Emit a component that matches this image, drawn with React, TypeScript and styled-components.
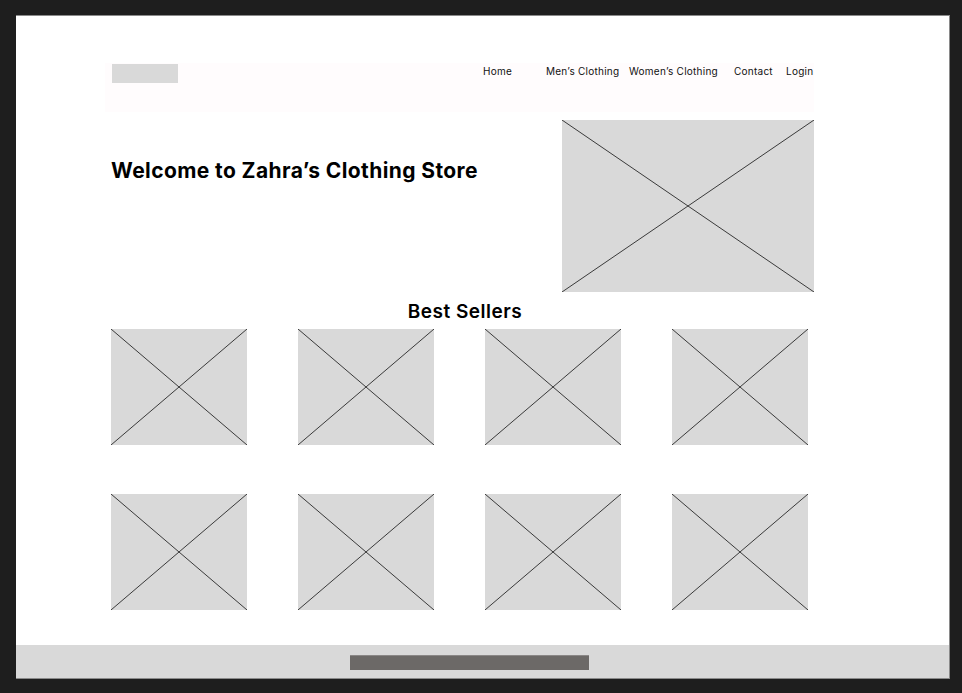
import React from 'react';
import styled, { createGlobalStyle } from 'styled-components';

const GlobalStyle = createGlobalStyle`
  html, body {
    margin: 0;
    padding: 0;
    background: #1e1e1e;
  }
  body {
    font-family: Inter, "Open Sans", Arial, sans-serif;
    color: #000;
  }
`;

const Stage = styled.div`
  padding: 15px 0 0 16px;
  min-height: 693px;
  box-sizing: border-box;
`;

const Frame = styled.div`
  width: 933px;
  border-top: 1px solid #8a8a8a;
  border-right: 1px solid #8a8a8a;
  border-bottom: 1px solid #8a8a8a;
  background: #d9d9d9;
`;

const Canvas = styled.main`
  background: #ffffff;
  height: 629px;
  box-sizing: border-box;
  padding: 47px 0 0 95px;
`;

const Column = styled.div`
  width: 703px;
`;

const Header = styled.header`
  display: flex;
  align-items: flex-start;
  justify-content: space-between;
  width: 709px;
  height: 49px;
  margin-left: -6px;
  box-sizing: border-box;
  padding: 1px 2px 0 7px;
  background: #fffcfd;
`;

const Logo = styled.div`
  width: 66px;
  height: 19px;
  background: #d9d9d9;
`;

const Nav = styled.nav`
  display: flex;
  margin-top: 1px;
`;

const NavLink = styled.a<{ $w: number }>`
  width: ${(p) => p.$w}px;
  font-size: 10px;
  line-height: 12px;
  color: #111;
  text-decoration: none;
  white-space: nowrap;
  letter-spacing: 0.25px;
`;

const Hero = styled.section`
  display: flex;
  justify-content: space-between;
  align-items: flex-start;
  margin-top: 8px;
`;

const Heading = styled.h1`
  margin: 38px 0 0;
  font-size: 21px;
  line-height: 25px;
  font-weight: 700;
  letter-spacing: 0.4px;
`;

const Placeholder = styled.div<{ $w: number; $h: number }>`
  width: ${(p) => p.$w}px;
  height: ${(p) => p.$h}px;
  background: #d9d9d9;
  flex-shrink: 0;

  svg {
    display: block;
    width: 100%;
    height: 100%;
  }
`;

const SectionTitle = styled.h2`
  margin: 9px 0 6px;
  padding-left: 5px;
  text-align: center;
  font-size: 19px;
  line-height: 22px;
  font-weight: 600;
  letter-spacing: 0.5px;
`;

const ProductGrid = styled.div`
  display: grid;
  grid-template-columns: repeat(4, 136px);
  column-gap: 51px;
  row-gap: 49px;
`;

const Footer = styled.footer`
  height: 33px;
  box-sizing: border-box;
  padding: 10px 0 0 334px;
`;

const FooterBar = styled.div`
  width: 239px;
  height: 15px;
  background: #6c6967;
  border-top: 1px solid #8a8786;
  box-sizing: border-box;
`;

const Cross = () => (
  <svg viewBox="0 0 100 100" preserveAspectRatio="none">
    <line x1="0" y1="0" x2="100" y2="100" stroke="#3a3a3a" strokeWidth="1" vectorEffect="non-scaling-stroke" />
    <line x1="100" y1="0" x2="0" y2="100" stroke="#3a3a3a" strokeWidth="1" vectorEffect="non-scaling-stroke" />
  </svg>
);

const navItems = [
  { label: 'Home', w: 63 },
  { label: 'Men’s Clothing', w: 83 },
  { label: 'Women’s Clothing', w: 105 },
  { label: 'Contact', w: 52 },
  { label: 'Login', w: 26 },
];

const App = () => {
  return (
    <>
      <GlobalStyle />
      <Stage>
        <Frame>
          <Canvas>
            <Column>
              <Header>
                <Logo />
                <Nav>
                  {navItems.map((item) => (
                    <NavLink key={item.label} href="#" $w={item.w}>
                      {item.label}
                    </NavLink>
                  ))}
                </Nav>
              </Header>

              <Hero>
                <Heading>Welcome to Zahra’s Clothing Store</Heading>
                <Placeholder $w={252} $h={172}>
                  <Cross />
                </Placeholder>
              </Hero>

              <SectionTitle>Best Sellers</SectionTitle>
              <ProductGrid>
                {Array.from({ length: 8 }).map((_, i) => (
                  <Placeholder key={i} $w={136} $h={116}>
                    <Cross />
                  </Placeholder>
                ))}
              </ProductGrid>
            </Column>
          </Canvas>
          <Footer>
            <FooterBar />
          </Footer>
        </Frame>
      </Stage>
    </>
  );
};

export default App;
